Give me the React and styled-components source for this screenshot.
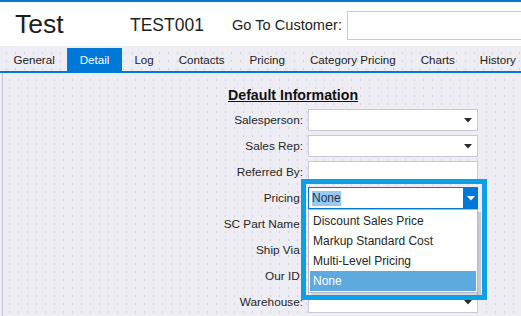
import styled, { createGlobalStyle } from "styled-components"

const GlobalStyle = createGlobalStyle`
  html, body {
    margin: 0;
    padding: 0;
    background: #eeedf3;
    overflow: hidden;
  }
  body {
    font-family: "Liberation Sans", Arial, sans-serif;
    color: #262626;
  }
`

const tabs = ["General", "Detail", "Log", "Contacts", "Pricing", "Category Pricing", "Charts", "History"]

const fields = [
  { label: "Salesperson:", kind: "select" },
  { label: "Sales Rep:", kind: "select" },
  { label: "Referred By:", kind: "text" },
  { label: "Pricing:", kind: "pricing" },
  { label: "SC Part Name:", kind: "text" },
  { label: "Ship Via:", kind: "select" },
  { label: "Our ID:", kind: "text" },
  { label: "Warehouse:", kind: "select" },
]

const pricingOptions = ["Discount Sales Price", "Markup Standard Cost", "Multi-Level Pricing", "None"]

const Arrow = ({ color = "#2b2b2b" }) => (
  <svg width="8" height="5" viewBox="0 0 8 5">
    <path d="M0 0 H8 L4 4.5 Z" fill={color} />
  </svg>
)

const App = () => {
  return (
    <Page>
      <GlobalStyle />
      <Header>
        <Title>Test</Title>
        <Code>TEST001</Code>
        <GoLabel>Go To Customer:</GoLabel>
        <GoInput />
      </Header>

      <TabBar>
        {tabs.map((t) => (
          <Tab key={t} $active={t === "Detail"}>{t}</Tab>
        ))}
      </TabBar>

      <Content>
        <Form>
          <SectionTitle>Default Information</SectionTitle>
          {fields.map((f) => (
            <Row key={f.label}>
              <Label>{f.label}</Label>
              {f.kind === "pricing" ? (
                <PricingWrap>
                  <Combo>
                    <ComboText>
                      <Selected>None</Selected>
                    </ComboText>
                    <ComboButton>
                      <Arrow color="#ffffff" />
                    </ComboButton>
                  </Combo>
                  <DropList>
                    {pricingOptions.map((o) => (
                      <Option key={o} $hover={o === "None"}>{o}</Option>
                    ))}
                  </DropList>
                  <Highlight />
                </PricingWrap>
              ) : (
                <Field>
                  {f.kind === "select" && (
                    <FieldArrow>
                      <Arrow />
                    </FieldArrow>
                  )}
                </Field>
              )}
            </Row>
          ))}
        </Form>
      </Content>
    </Page>
  )
}

export default App

const Page = styled.div`
  width: 521px;
  height: 316px;
  overflow: hidden;
  background-color: #eeedf3;
`

const Header = styled.header`
  display: flex;
  align-items: center;
  height: 38px;
  padding-top: 6px;
  border-top: 2px solid #0078d7;
  background: #ffffff;
  white-space: nowrap;
`

const Title = styled.div`
  flex: 0 0 130px;
  padding-left: 15px;
  box-sizing: border-box;
  font-size: 26.5px;
  line-height: 30px;
  color: #1e1e1e;
  margin-top: -6px;
`

const Code = styled.div`
  flex: 0 0 102px;
  font-size: 17.5px;
  line-height: 22px;
  color: #1e1e1e;
  margin-top: -4px;
`

const GoLabel = styled.div`
  flex: 0 0 115px;
  font-size: 14.6px;
  line-height: 20px;
  color: #1e1e1e;
  margin-top: -4px;
`

const GoInput = styled.div`
  flex: 0 0 200px;
  height: 29px;
  box-sizing: border-box;
  border: 1px solid #c9c8d8;
  background: #fff;
  margin-top: -3px;
`

const dots = `
  background-color: #eeedf3;
  background-image: radial-gradient(circle, #d3d1df 0.6px, transparent 1px);
  background-size: 9px 8px;
  background-position: 2px 3px;
`

const TabBar = styled.nav`
  display: flex;
  align-items: flex-end;
  height: 25px;
  padding-left: 1px;
  border-bottom: 2px solid #0078d7;
  white-space: nowrap;
  ${dots}
`

const Tab = styled.div`
  height: 23px;
  line-height: 23px;
  padding: 0 12.5px;
  font-size: 11.6px;
  color: ${(p) => (p.$active ? "#ffffff" : "#222222")};
  background: ${(p) => (p.$active ? "#0078d7" : "transparent")};
`

const Content = styled.main`
  margin-left: 2px;
  border-left: 1px solid #c6c5d4;
  height: 243px;
  padding-top: 12px;
  box-sizing: border-box;
  ${dots}
`

const Form = styled.div`
  display: grid;
  grid-template-columns: 300px 170px;
  column-gap: 5px;
  row-gap: 4px;
`

const SectionTitle = styled.div`
  grid-column: 1 / -1;
  margin-left: 225px;
  font-size: 14.2px;
  font-weight: bold;
  line-height: 20px;
  text-decoration: underline;
  color: #111;
`

const Row = styled.div`
  display: contents;
`

const Label = styled.div`
  height: 22px;
  line-height: 22px;
  text-align: right;
  font-size: 11.8px;
  color: #262626;
  white-space: nowrap;
`

const Field = styled.div`
  display: flex;
  align-items: center;
  justify-content: flex-end;
  height: 22px;
  box-sizing: border-box;
  border: 1px solid #c9c8d8;
  background: #ffffff;
  padding-right: 5px;
`

const FieldArrow = styled.span`
  display: flex;
  margin-top: 1px;
`

const PricingWrap = styled.div`
  position: relative;
  height: 22px;
`

const Combo = styled.div`
  display: flex;
  align-items: center;
  height: 22px;
  box-sizing: border-box;
  border: 1px solid #0078d7;
  background: #ffffff;
  padding-left: 3px;
`

const ComboText = styled.div`
  flex: 1;
  display: flex;
`

const Selected = styled.span`
  font-size: 12px;
  line-height: 15px;
  color: #1f3550;
  background: #99c9ef;
`

const ComboButton = styled.span`
  display: flex;
  align-items: center;
  justify-content: center;
  align-self: stretch;
  width: 15px;
  margin: -1px -1px -1px 0;
  background: #0078d7;
`

const DropList = styled.div`
  position: absolute;
  top: 22px;
  left: 0;
  width: 170px;
  box-sizing: border-box;
  border: 1px solid #b8b7c6;
  padding: 1px;
  background: #ffffff;
  box-shadow: 3px 3px 0 rgba(120, 120, 135, 0.3);
  z-index: 2;
`

const Option = styled.div`
  height: 20px;
  line-height: 20px;
  padding-left: 3px;
  font-size: 12px;
  color: ${(p) => (p.$hover ? "#ffffff" : "#262626")};
  background: ${(p) => (p.$hover ? "#5ea9de" : "transparent")};
`

const Highlight = styled.div`
  position: absolute;
  left: -7px;
  top: -8px;
  width: 186px;
  height: 121px;
  box-sizing: border-box;
  border: 5px solid #0aa1e6;
  z-index: 3;
  pointer-events: none;
`
